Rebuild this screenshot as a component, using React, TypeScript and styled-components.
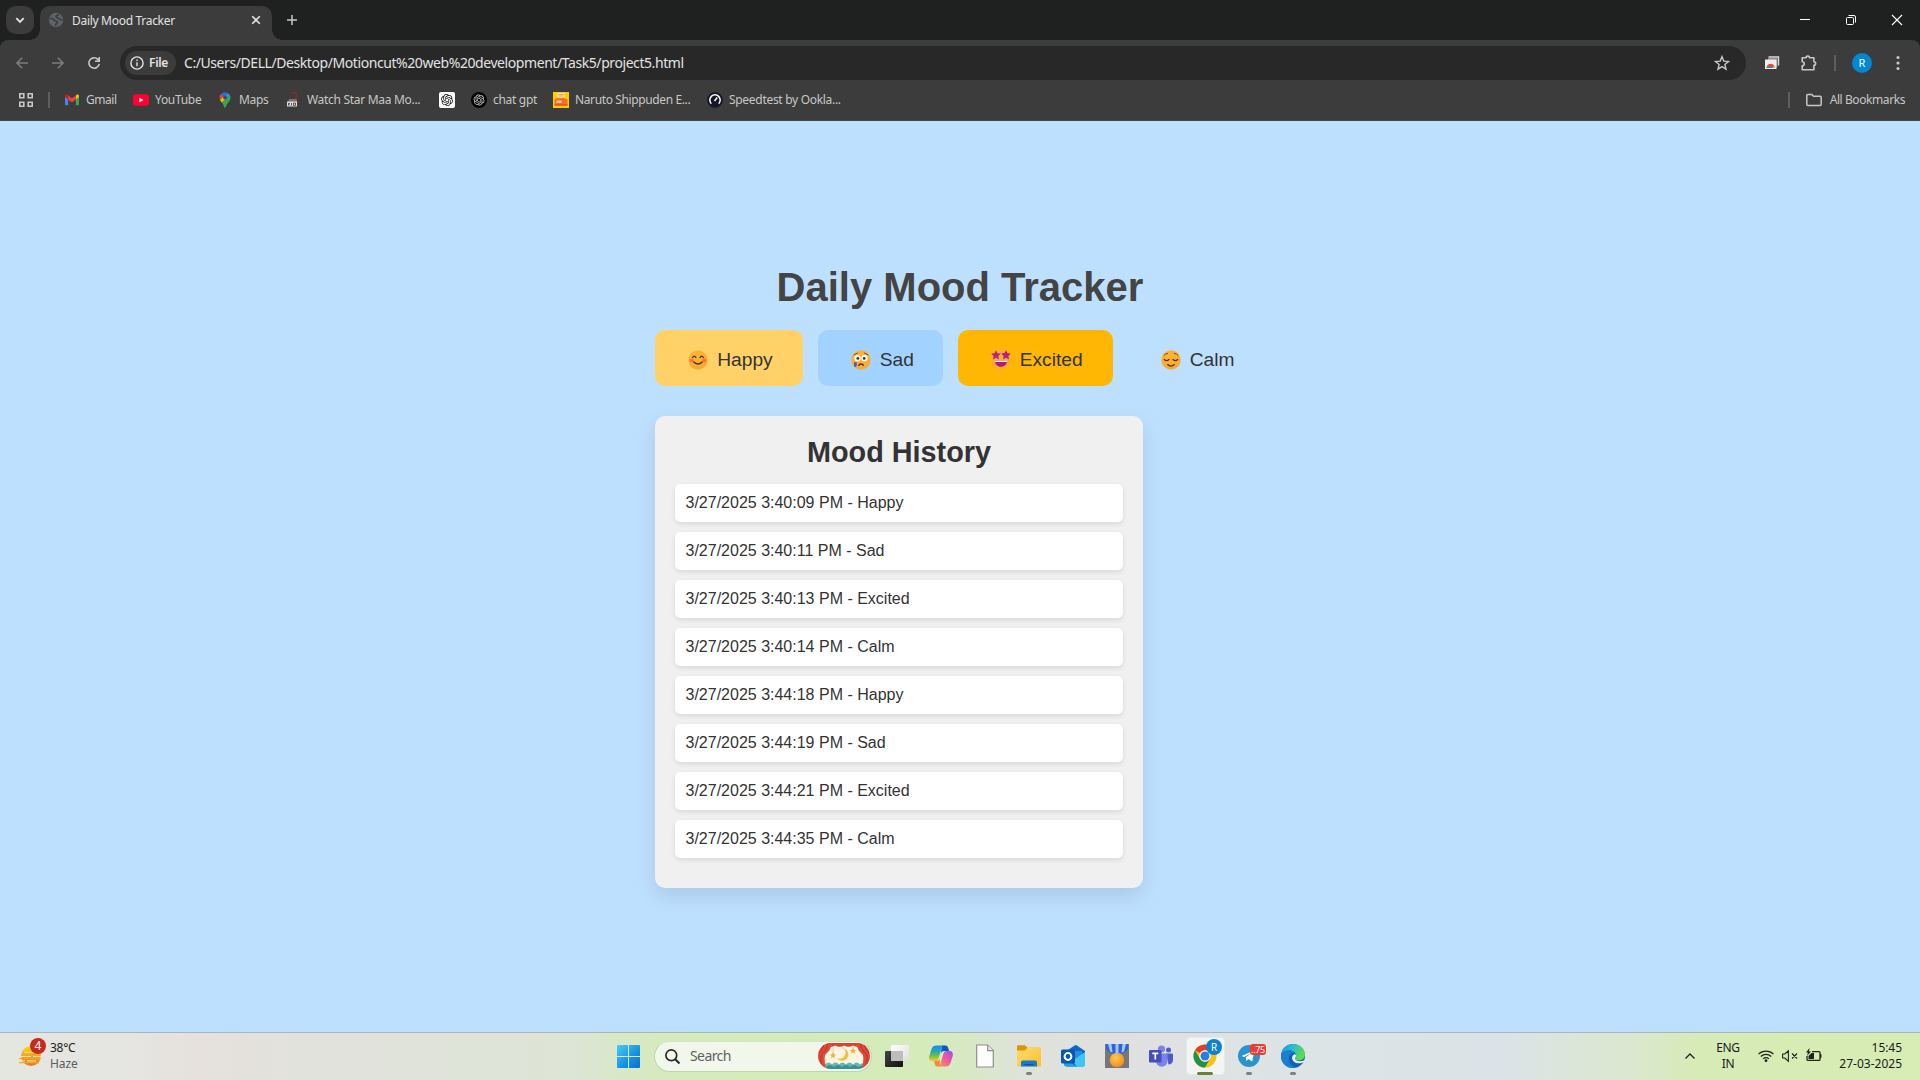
import React from "react";
import styled, { createGlobalStyle } from "styled-components";

const uiFont = `"Segoe UI", "Noto Sans", "Open Sans", sans-serif`;

const GlobalStyle = createGlobalStyle`
  * { box-sizing: border-box; }
  body { margin: 0; overflow: hidden; background: #bde0fe; font-family: Arial, "Liberation Sans", sans-serif; }
  svg { display: block; flex: none; overflow: visible; }
`;

const Screen = styled.div`
  width: 1920px;
  height: 1080px;
  display: flex;
  flex-direction: column;
`;

/* ---------- browser chrome ---------- */

const TabStrip = styled.div`
  height: 40px;
  flex: none;
  display: flex;
  align-items: flex-end;
  padding-left: 6px;
  background: #1f2020;
`;

const TabSearch = styled.div`
  width: 28px;
  height: 28px;
  margin: 0 6px 6px 0;
  border-radius: 10px;
  background: #3c3c3c;
  display: flex;
  align-items: center;
  justify-content: center;
`;

const Tab = styled.div`
  position: relative;
  width: 232px;
  height: 34px;
  padding: 0 9px 6px 8px;
  display: flex;
  align-items: center;
  border-radius: 10px 10px 0 0;
  background: #3c3c3c;
  &::before,
  &::after {
    content: "";
    position: absolute;
    bottom: 0;
    width: 10px;
    height: 10px;
  }
  &::before {
    left: -10px;
    background: radial-gradient(circle at 0 0, transparent 9.5px, #3c3c3c 10px);
  }
  &::after {
    right: -10px;
    background: radial-gradient(circle at 100% 0, transparent 9.5px, #3c3c3c 10px);
  }
`;

const Label = styled.span<{ $size?: number; $color?: string; $spacing?: number; $weight?: number }>`
  font-family: ${uiFont};
  font-size: ${(p) => p.$size ?? 12}px;
  font-weight: ${(p) => p.$weight ?? 400};
  color: ${(p) => p.$color ?? "#c7c7c7"};
  letter-spacing: ${(p) => p.$spacing ?? 0}px;
  line-height: 16px;
  white-space: nowrap;
`;

const TabTitle = styled(Label)`
  flex: 1;
  margin-left: 8px;
  padding-top: 1px;
`;

const NewTab = styled.div`
  width: 28px;
  height: 28px;
  margin: 0 0 6px 6px;
  display: flex;
  align-items: center;
  justify-content: center;
`;

const WindowButtons = styled.div`
  height: 40px;
  margin-left: auto;
  display: flex;
`;

const WindowButton = styled.div`
  width: 46px;
  display: flex;
  align-items: center;
  justify-content: center;
`;

const ToolbarBackdrop = styled.div`
  flex: none;
  height: 81px;
  background: #1f2020;
`;

const ToolbarPanel = styled.div`
  height: 81px;
  border-radius: 8px 8px 0 0;
  border-bottom: 1px solid #474747;
  background: #3c3c3c;
`;

const Toolbar = styled.div`
  height: 46px;
  display: flex;
  align-items: center;
`;

const NavButton = styled.div<{ $w?: number }>`
  width: ${(p) => p.$w ?? 36}px;
  flex: none;
  display: flex;
  justify-content: center;
`;

const MenuButton = styled.div`
  width: 46px;
  flex: none;
  padding-left: 22px;
`;

const NavGroup = styled.div`
  width: 120px;
  flex: none;
  padding-left: 4px;
  display: flex;
`;

const AddressBar = styled.div`
  width: 1626px;
  height: 34px;
  flex: none;
  padding: 0 16px 0 5px;
  display: flex;
  align-items: center;
  border-radius: 17px;
  background: #282828;
`;

const FileChip = styled.div`
  width: 51px;
  height: 24px;
  margin-right: 8px;
  padding-left: 5px;
  display: flex;
  align-items: center;
  gap: 5px;
  border-radius: 12px;
  background: #3c3c3c;
`;

const Grow = styled.div`
  flex: 1;
`;

const Separator = styled.div`
  width: 2px;
  height: 16px;
  background: #5e5e5e;
`;

const Avatar = styled.div<{ $size: number }>`
  width: ${(p) => p.$size}px;
  height: ${(p) => p.$size}px;
  border-radius: 50%;
  background: #0288d1;
  display: flex;
  align-items: center;
  justify-content: center;
`;

const BookmarksBar = styled.div`
  height: 34px;
  padding: 0 15px 6px 18px;
  display: flex;
  align-items: center;
`;

const AppsButton = styled.div`
  width: 30px;
`;

const BookmarkList = styled.div`
  margin-left: 14px;
  display: flex;
`;

const Bookmark = styled.div<{ $w: number }>`
  width: ${(p) => p.$w}px;
  display: flex;
  align-items: center;
  gap: 6px;
`;

const AllBookmarks = styled.div`
  margin-left: 16px;
  display: flex;
  align-items: center;
  gap: 8px;
`;

/* ---------- mood tracker page ---------- */

const Page = styled.main`
  height: 911px;
  flex: none;
  padding-top: 143px;
  display: flex;
  flex-direction: column;
  align-items: center;
  background: #bde0fe;
  color: #333;
`;

const Title = styled.h1`
  margin: 0 0 20px;
  font-size: 40px;
  line-height: 46px;
  color: #444;
`;

const Tracker = styled.div`
  width: 610px;
`;

const MoodButtons = styled.div`
  display: flex;
  gap: 15px;
  margin-bottom: 30px;
`;

const MoodButton = styled.button<{ $bg: string; $w: number }>`
  width: ${(p) => p.$w}px;
  height: 56px;
  flex: none;
  padding: 3px 0 0 33px;
  display: flex;
  align-items: center;
  gap: 9.2px;
  border: 0;
  border-radius: 10px;
  background: ${(p) => p.$bg};
  color: #333;
  font: 19.2px Arial, "Liberation Sans", sans-serif;
`;

const History = styled.section`
  width: 488px;
  padding: 20px;
  border-radius: 10px;
  background: #f0f0f0;
  box-shadow: 0 8px 20px rgba(0, 0, 0, 0.1);
`;

const HistoryTitle = styled.h2`
  margin: 0 0 15px;
  font-size: 28.8px;
  line-height: 33px;
  text-align: center;
`;

const HistoryList = styled.ul`
  margin: 0;
  padding: 0;
  list-style: none;
`;

const HistoryItem = styled.li`
  margin-bottom: 10px;
  padding: 10px 10px 10px 10.5px;
  border-radius: 5px;
  background: #fff;
  box-shadow: 0 2px 5px rgba(0, 0, 0, 0.1);
  font-size: 16px;
  line-height: 18px;
`;

/* ---------- taskbar ---------- */

const Taskbar = styled.footer`
  height: 48px;
  flex: none;
  padding-bottom: 1px;
  display: flex;
  border-top: 1px solid #a7b5bd;
  background: linear-gradient(
    90deg,
    #e4e6e0 0,
    #e5e5e1 130px,
    #e6e1dc 190px,
    #e1e2dc 330px,
    #dde5d6 570px,
    #d6eabe 660px,
    #d3ecb7 800px,
    #d5ebbb 940px,
    #dfe3da 1020px,
    #e0e0e0 1120px,
    #dde4e6 1300px,
    #dce3e8 1500px,
    #dbe8cd 1640px,
    #d7ebb6 1700px,
    #d8ecb5 1920px
  );
`;

const Weather = styled.div`
  width: 610px;
  padding-left: 19px;
  display: flex;
  align-items: center;
`;

const WeatherText = styled.div`
  margin-left: 7px;
  display: flex;
  flex-direction: column;
`;

const StartButton = styled.div`
  width: 44px;
  padding-left: 7px;
  display: flex;
  align-items: center;
`;

const SearchBox = styled.div`
  width: 218px;
  height: 31px;
  margin: 8px 3px 0 0;
  padding: 0 1px 1px 10px;
  display: flex;
  align-items: center;
  border-radius: 16px;
  border: 1px solid #c3d3ae;
  border-top-color: #d5e4c4;
  background: #f2f7ec;
`;

const SearchText = styled(Label)`
  flex: 1;
  margin-left: 10px;
`;

const AppSlot = styled.div<{ $state?: "running" | "active" }>`
  position: relative;
  width: 44px;
  display: flex;
  align-items: center;
  justify-content: center;
  &::after {
    content: "";
    display: ${(p) => (p.$state ? "block" : "none")};
    position: absolute;
    bottom: 4px;
    width: ${(p) => (p.$state === "active" ? 16 : 6)}px;
    height: 3px;
    border-radius: 2px;
    background: ${(p) => (p.$state === "active" ? "#6b8039" : "#7d7f80")};
  }
`;

const ActiveTile = styled.div`
  width: 39px;
  height: 38px;
  display: flex;
  align-items: center;
  justify-content: center;
  border-radius: 4px;
  border: 1px solid #e6e9e8;
  background: #f3f4f4;
`;

const Badge = styled.div<{ $top: number; $left: number; $w: number; $h: number; $bg: string; $r: number }>`
  position: absolute;
  top: ${(p) => p.$top}px;
  left: ${(p) => p.$left}px;
  width: ${(p) => p.$w}px;
  height: ${(p) => p.$h}px;
  border-radius: ${(p) => p.$r}px;
  background: ${(p) => p.$bg};
  display: flex;
  align-items: center;
  justify-content: center;
`;

const WeatherIcon = styled.div`
  position: relative;
`;

const Tray = styled.div`
  margin-left: auto;
  padding-right: 18px;
  display: flex;
  align-items: center;
`;

const TrayLines = styled.div<{ $w: number; $align: string }>`
  width: ${(p) => p.$w}px;
  display: flex;
  flex-direction: column;
  align-items: ${(p) => p.$align};
`;

const TrayChevron = styled.div`
  width: 32px;
`;

const TrayIcons = styled.div`
  margin: 0 0 0 19px;
  display: flex;
  align-items: center;
  gap: 8px;
`;

/* ---------- drawings ---------- */

const stroke = (color: string, width = 1.5) => ({ fill: "none", stroke: color, strokeWidth: width });

const OpenAiKnot = ({ color, size }: { color: string; size: number }) => (
  <svg width={size} height={size} viewBox="0 0 24 24" fill={color}>
    <path d="M22.28 9.82a5.98 5.98 0 0 0-.52-4.91 6.05 6.05 0 0 0-6.51-2.9A6.07 6.07 0 0 0 4.98 4.18a5.98 5.98 0 0 0-4 2.9 6.05 6.05 0 0 0 .74 7.1 5.98 5.98 0 0 0 .51 4.91 6.05 6.05 0 0 0 6.52 2.9A5.98 5.98 0 0 0 13.26 24a6.06 6.06 0 0 0 5.77-4.21 5.99 5.99 0 0 0 4-2.9 6.06 6.06 0 0 0-.75-7.07zm-9.02 12.61a4.48 4.48 0 0 1-2.88-1.04l.14-.08 4.78-2.76a.8.8 0 0 0 .39-.68v-6.74l2.02 1.17.04.05v5.58a4.5 4.5 0 0 1-4.49 4.5zM3.6 18.3a4.47 4.47 0 0 1-.53-3.01l.14.09 4.78 2.76a.77.77 0 0 0 .78 0l5.84-3.37v2.33l-.03.06L9.74 19.95A4.5 4.5 0 0 1 3.6 18.3zM2.34 7.9a4.49 4.49 0 0 1 2.37-1.98V11.6a.77.77 0 0 0 .39.68l5.81 3.35-2.02 1.17h-.07l-4.83-2.79A4.5 4.5 0 0 1 2.34 7.9zm16.6 3.86-5.84-3.39 2.02-1.16h.07l4.83 2.79a4.49 4.49 0 0 1-.68 8.1v-5.68a.79.79 0 0 0-.4-.66zm2.01-3.03-.14-.08-4.77-2.78a.78.78 0 0 0-.79 0L9.41 9.23V6.9l.03-.06 4.83-2.79a4.5 4.5 0 0 1 6.68 4.66zM8.31 12.86l-2.02-1.16-.04-.06V6.07a4.5 4.5 0 0 1 7.38-3.45l-.14.08-4.78 2.76a.8.8 0 0 0-.39.68zm1.1-2.36L12 9l2.61 1.5v3L12 15l-2.6-1.5z" />
  </svg>
);

const GlobeIcon = () => (
  <svg width="16" height="16" viewBox="0 0 16 16">
    <circle cx="8" cy="8" r="7.2" fill="#5f6368" />
    <path d="M1.500 6.500h2.300c2.200 0 1.700 2.500 3.700 2.500 2.500 0 2 1.500 1 2.300-.8.600-.8 1.500-.8 2.700M11 1.800C10.500 3.500 8 3 8 4.500c0 1.700 2.500.8 3 2.300.4 1.200 2 1 3.500.8" {...stroke("#3a3c40", 1.600)} />
  </svg>
);

const GmailIcon = () => (
  <svg width="16" height="16" viewBox="0 0 16 16">
    <path d="M1 4.2v8.3c0 .5.4.8.9.8h2.3V7z" fill="#4285f4" />
    <path d="M15 4.2v8.3c0 .5-.4.8-.9.8h-2.3V7z" fill="#34a853" />
    <path d="M11.8 3.4V7.5L15 5V4c0-1.3-1.5-2-2.5-1.2z" fill="#fbbc04" />
    <path d="M4.2 3.4V7.5L1 5V4c0-1.3 1.5-2 2.5-1.2z" fill="#c5221f" />
    <path d="M4.2 3.4 8 6.3l3.8-2.9v4.1L8 10.4 4.2 7.5z" fill="#ea4335" />
  </svg>
);

const YouTubeIcon = () => (
  <svg width="16" height="16" viewBox="0 0 16 16">
    <rect y="2.2" width="16" height="11.6" rx="3" fill="#ff0033" />
    <path d="M6.4 5.7v4.6L10.4 8z" fill="#fff" />
  </svg>
);

const MapsIcon = () => (
  <svg width="16" height="16" viewBox="0 0 16 16">
    <path d="M8 .3a5.4 5.4 0 0 0-4.2 2l3 2.5L11 1.2A5.4 5.4 0 0 0 8 .3z" fill="#1a73e8" />
    <path d="M3.8 2.3a5.4 5.4 0 0 0-.7 5.8l3.7-3.6z" fill="#ea4335" />
    <path d="M11 1.2 6.8 5 9.2 7 13 3.3a5 5 0 0 0-2-2.1z" fill="#4285f4" />
    <path d="M3.1 8.1c.4.9 1 1.7 1.7 2.5L9.6 6.6 6.5 4.5z" fill="#fbbc04" />
    <path d="M13 3.3c1 2.1.6 4.2-.7 6-1.3 1.7-2.7 2.6-3.3 5.3-.2.9-.5 1.2-1 1.2s-.8-.3-1-1.2c-.4-1.600-1-2.700-2.200-4z" fill="#34a853" />
    <circle cx="8" cy="5.7" r="1.9" fill="#3c4a73" />
  </svg>
);

const StarMaaIcon = () => (
  <svg width="16" height="16" viewBox="0 0 16 16">
    <path d="M6 1.500c2-1.500 5-1 5.500 1S10 5 11 7s1.500 4.500 1 7" {...stroke("#8a2b2b", 1.300)} />
    <path d="M6.500 3.500 8.500 6" {...stroke("#7a2b2b", 1)} />
    <path d="M4 7h7.500l.8 3H3z" fill="#77716f" />
    <rect x="2" y="9.500" width="10" height="5" fill="#dcdcdc" />
    <path d="M3.500 11v2.500m0-1.300 1.500-1.200m-1.500 1 1.500 1.500M6.500 11v2.500M8.500 11h2v2.500h-2z" {...stroke("#4b4b4b", 0.900)} />
  </svg>
);

const ChatWhiteIcon = () => (
  <svg width="16" height="16" viewBox="0 0 16 16">
    <rect width="16" height="16" rx="2" fill="#fff" />
    <g transform="translate(2 2)">
      <OpenAiKnot color="#111" size={12} />
    </g>
  </svg>
);

const ChatDarkIcon = () => (
  <svg width="16" height="16" viewBox="0 0 16 16">
    <circle cx="8" cy="8" r="8" fill="#000" />
    <g transform="translate(2.500 2.500)">
      <OpenAiKnot color="#ddd" size={11} />
    </g>
  </svg>
);

const NarutoIcon = () => (
  <svg width="16" height="16" viewBox="0 0 16 16">
    <rect width="16" height="16" fill="#ffcc00" />
    <path d="M4.500 1h7v4.500h-7z" fill="#ffe9c4" />
    <path d="M5.500 2.500h5M5.500 4h5" {...stroke("#e8905a", 0.900)} />
    <path d="M1.500 7.500 4 6h7l3.500 1.500V13h-13z" fill="#f0702a" />
    <path d="M3.500 8.500h5v2.500h-5z" fill="#ffc79a" />
    <path d="M1.500 13h13" {...stroke("#d9541a", 1.500)} />
  </svg>
);

const SpeedtestIcon = () => (
  <svg width="16" height="16" viewBox="0 0 16 16">
    <circle cx="8" cy="8" r="7.800" fill="#141526" />
    <path d="M4.300 11.700A5.200 5.200 0 1 1 11.700 11.700" {...stroke("#fff", 1.500)} />
    <path d="m7.500 9 2.700-3.500" {...stroke("#fff", 1.500)} />
  </svg>
);

type MoodName = "Happy" | "Sad" | "Excited" | "Calm";

const MoodFace = ({ mood }: { mood: MoodName }) => (
  <svg width="20" height="20" viewBox="0 0 20 20">
    <defs>
      <radialGradient id={`face-${mood}`} cx="40%" cy="30%" r="80%">
        <stop offset="0" stopColor="#ffb636" />
        <stop offset="1" stopColor="#fba62c" />
      </radialGradient>
    </defs>
    <circle cx="10" cy="10" r="9.700" fill={`url(#face-${mood})`} />
    {mood === "Happy" && (
      <>
        <circle cx="3.700" cy="10.500" r="2" fill="#ff7043" />
        <circle cx="16.300" cy="10.500" r="2" fill="#ff7043" />
        <path d="M4.600 7.600q1.700-3 3.400 0M12 7.600q1.700-3 3.400 0" {...stroke("#4a3222", 1.200)} strokeLinecap="round" />
        <path d="M5.800 12q4.200 4 8.400 0" {...stroke("#4a3222", 1.300)} strokeLinecap="round" />
      </>
    )}
    {mood === "Sad" && (
      <>
        <path d="M3 4.800 6.500 3M17 4.800 13.500 3" {...stroke("#6b4420", 0.900)} strokeLinecap="round" />
        <circle cx="6.500" cy="8.200" r="3.100" fill="#fff" />
        <circle cx="13.500" cy="8.200" r="3.100" fill="#fff" />
        <circle cx="6.800" cy="8.400" r="1.400" fill="#35343f" />
        <circle cx="13.200" cy="8.400" r="1.400" fill="#35343f" />
        <path d="M7.700 15.200q2.300-2.400 4.600 0" {...stroke("#4a3222", 1.300)} strokeLinecap="round" />
        <path d="M3 12.300h2.800v2.800a1.600 1.600 0 0 1-2.800 1.200z" fill="#4759e0" />
      </>
    )}
    {mood === "Excited" && (
      <>
        <path d="m5 .2 1.500 3 3.300.4-2.400 2.400.6 3.400-3-1.600-3 1.600.6-3.400L.2 3.700l3.300-.5zM15 .2l1.500 3 3.300.4-2.400 2.400.6 3.400-3-1.600-3 1.600.6-3.400-2.400-2.400 3.300-.5z" fill="#be1e87" />
        <path d="M4 10.800h12c0 3.600-2.300 6-6 6s-6-2.400-6-6z" fill="#b5177e" />
        <path d="M4 10.800h12v1.200H4.200z" fill="#fff" />
      </>
    )}
    {mood === "Calm" && (
      <>
        <path d="M3 5.300q1.500-2 3.600-1.900M17 5.300q-1.500-2-3.600-1.900" {...stroke("#6b4420", 0.900)} strokeLinecap="round" />
        <path d="M3.300 9.500q2.200 2.400 4.600 0M12.100 9.500q2.200 2.400 4.600 0" {...stroke("#4a3222", 1.200)} strokeLinecap="round" />
        <path d="M6.600 14.600q3.400 3 6.800 0" {...stroke("#4a3222", 1.300)} strokeLinecap="round" />
      </>
    )}
  </svg>
);

const HazeIcon = () => (
  <svg width="24" height="24" viewBox="0 0 24 24">
    <defs>
      <linearGradient id="haze" x1="0" y1="0" x2="0" y2="1">
        <stop offset="0" stopColor="#ffd21f" />
        <stop offset="1" stopColor="#ef7412" />
      </linearGradient>
    </defs>
    <circle cx="12" cy="12" r="10" fill="url(#haze)" />
    <path d="M5 8.300h10M1 12.500h11M14 12.500h8M0 17h6M8 16.800h9" {...stroke("#ffe0a0", 1.200)} />
    <path d="M0 14.500h11M12 14.500h9M0 18.700h20" {...stroke("#e9a445", 1.200)} />
  </svg>
);

const WindowsIcon = () => (
  <svg width="23" height="23" viewBox="0 0 23 23">
    <defs>
      <linearGradient id="win" x1="0" y1="0" x2="1" y2="1">
        <stop offset="0" stopColor="#4ccbf9" />
        <stop offset="0.550" stopColor="#1795e2" />
        <stop offset="1" stopColor="#0470cf" />
      </linearGradient>
    </defs>
    <path d="M1 0h10v11H0V1a1 1 0 0 1 1-1zM12 0h10a1 1 0 0 1 1 1v10H12zM0 12h11v11H1a1 1 0 0 1-1-1zM12 12h11v10a1 1 0 0 1-1 1H12z" fill="url(#win)" />
  </svg>
);

const TheatreIcon = () => (
  <svg width="52" height="26" viewBox="0 0 52 26">
    <clipPath id="stage">
      <rect width="52" height="26" rx="13" />
    </clipPath>
    <g clipPath="url(#stage)">
      <rect width="52" height="26" fill="#fbf5e2" />
      <path d="M15 0v11M25 0v6M35 0v6" {...stroke("#e2c889", 0.800)} />
      <path d="M25.500 5.500a6.200 6.200 0 1 1-6.500 9.500 5.800 5.800 0 0 0 6.500-9.500z" fill="#f0bd49" />
      <path d="m15 9 .9 2.200 2.300.2-1.800 1.500.6 2.300-2-1.300-2 1.300.6-2.300-1.800-1.500 2.300-.2zM35 4.500l.9 2.200 2.300.2-1.800 1.500.6 2.300-2-1.300-2 1.300.6-2.300-1.800-1.500 2.300-.2z" fill="#eeb23d" />
      <path d="M7 21.500q3.500-4 7 0 3.500-4 7 0 3.500-4 7 0 3.500-4 7 0 3.500-4 7 0 2-2 4-1V26H7z" fill="#65b9b0" />
      <path d="M8 24q4-4 8 0 4-4 8 0 4-4 8 0 4-4 8 0l5-2v5H8z" fill="#3b8f93" />
      <path d="M0 0h52v2.500q-4 2.500-8 0-4 2.500-9 0-4 2.500-9 0-4 2.500-9 0-4 2.500-9 0-4 2.500-8 0z" fill="#d8432f" />
      <path d="M0 0h14q-1 7-7 12-1 5 1 14H0zM52 0H38q1 7 7 12 1 5-1 14h8z" fill="#dd4a36" />
      <path d="M10 1Q8 8 3 12v12M6 1Q5 6 1 10M42 1q2 7 7 11v12M46 1q1 5 5 9" {...stroke("#b5332a", 1)} />
    </g>
  </svg>
);

const TaskViewIcon = () => (
  <svg width="24" height="24" viewBox="0 0 24 24">
    <defs>
      <linearGradient id="tv" x1="0" y1="0" x2="1" y2="1">
        <stop offset="0" stopColor="#444" />
        <stop offset="1" stopColor="#111" />
      </linearGradient>
      <linearGradient id="tvl" x1="0" y1="0" x2="1" y2="1">
        <stop offset="0" stopColor="#fff" />
        <stop offset="1" stopColor="#dedede" />
      </linearGradient>
    </defs>
    <rect x="0" y="7" width="18" height="16" rx="1" fill="url(#tv)" />
    <rect x="6" y="1" width="18" height="16" rx="1" fill="url(#tvl)" />
    <path d="M6 7h12v10H6z" fill="#bdbdbd" />
  </svg>
);

const CopilotIcon = () => (
  <svg width="24" height="24" viewBox="0 0 24 24">
    <defs>
      <linearGradient id="cpa" x1="0" y1="0" x2="0" y2="1">
        <stop offset="0" stopColor="#1b8fe8" />
        <stop offset="0.400" stopColor="#2aa5b8" />
        <stop offset="0.700" stopColor="#7fc143" />
        <stop offset="1" stopColor="#f8cb1c" />
      </linearGradient>
      <linearGradient id="cpb" x1="1" y1="0" x2="0" y2="1">
        <stop offset="0" stopColor="#a24de8" />
        <stop offset="0.500" stopColor="#ef5a9d" />
        <stop offset="1" stopColor="#ff9a4b" />
      </linearGradient>
    </defs>
    <path d="M13 1.500h3.500c1.600 0 2.200 1 2.600 2.300L20.200 7H15c-2 0-2.600.9-3.200 2.500z" fill="#0f54c8" />
    <path d="M7.500 1.500H15c-1.200 0-1.900.8-2.300 2.200l-3 10.300c-.6 2.100-1.500 3-3.500 3H3.500C.8 17-.4 15 .3 12L2.500 5c.9-2.500 2.500-3.500 5-3.500z" fill="url(#cpa)" />
    <path d="M16.500 22.500H9c1.200 0 1.900-.8 2.300-2.200L14.300 10c.6-2.100 1.500-3 3.500-3h2.700c2.700 0 3.900 2 3.200 5l-2.200 7c-.9 2.500-2.500 3.500-5 3.500z" fill="url(#cpb)" />
    <path d="M11 22.500H8.500c-1.600 0-2.200-1-2.600-2.300L5 17h2c2 0 3-.7 3.600-2.500z" fill="#f68a3c" />
  </svg>
);

const DocumentIcon = () => (
  <svg width="18" height="24" viewBox="0 0 18 24">
    <path d="M.7 1h11l5.600 5.600V23H.7z" fill="#fdfdfd" stroke="#8c8f8c" strokeWidth="1.200" />
    <path d="M11.700 1v5.600h5.600" fill="#e8e8e8" stroke="#8c8f8c" strokeWidth="1.200" />
  </svg>
);

const ExplorerIcon = () => (
  <svg width="24" height="24" viewBox="0 0 24 24">
    <defs>
      <linearGradient id="fold" x1="0" y1="0" x2="1" y2="1">
        <stop offset="0" stopColor="#ffdc6b" />
        <stop offset="1" stopColor="#f9be2c" />
      </linearGradient>
    </defs>
    <path d="M0 2.500A1.200 1.200 0 0 1 1.200 1.300H8l2.500 2.500H23v6H0z" fill="#d9950e" />
    <path d="M0 6.500h8l2.500-2.700h12.300A1.200 1.200 0 0 1 24 5v16.500a1 1 0 0 1-1 1H1a1 1 0 0 1-1-1z" fill="url(#fold)" />
    <path d="M4 22.500v-4.300a1.700 1.700 0 0 1 1.700-1.700h12.600a1.700 1.700 0 0 1 1.700 1.700v4.300z" fill="#1c79ca" />
    <path d="M7.500 20h9v1.200h-9z" fill="#0b559c" />
  </svg>
);

const OutlookIcon = () => (
  <svg width="24" height="24" viewBox="0 0 24 24">
    <path d="M3 8.500 14 1.300a1.500 1.500 0 0 1 1.600 0L24 7v13a2.500 2.500 0 0 1-2.500 2.500H6A3 3 0 0 1 3 19.500z" fill="#1467c4" />
    <path d="M6 7h15v9H6z" fill="#1f8ee4" />
    <path d="M24 8 11 17l5 5.500h5.500A2.500 2.500 0 0 0 24 20z" fill="#41c5f5" />
    <path d="M3 15 16 22.500H6a3 3 0 0 1-3-3z" fill="#1ba4e8" />
    <rect y="5.500" width="14" height="14" rx="1.500" fill="#0a57b0" />
    <circle cx="7" cy="12.500" r="3.400" {...stroke("#fff", 2)} />
  </svg>
);

const MedalIcon = () => (
  <svg width="24" height="24" viewBox="0 0 24 24">
    <defs>
      <radialGradient id="medal" cx="40%" cy="35%" r="70%">
        <stop offset="0" stopColor="#ffc94d" />
        <stop offset="1" stopColor="#f08a1d" />
      </radialGradient>
    </defs>
    <path d="M0 0h24v24H0z" fill="#777777" />
    <path d="M1 0h22v5l-3 3-5 2.500H9L4 8 1 5z" fill="#2d62df" />
    <path d="M3 0h3.500l1 8.500-2.500-1zM21 0h-3.500l-1 8.500 2.500-1zM10.500 0h3v10h-3z" fill="#9ccaff" />
    <circle cx="12" cy="16" r="7.300" fill="url(#medal)" />
  </svg>
);

const TeamsIcon = () => (
  <svg width="24" height="24" viewBox="0 0 24 24">
    <circle cx="19.500" cy="6" r="2.500" fill="#5059c9" />
    <circle cx="12.500" cy="5" r="3.600" fill="#7b83eb" />
    <path d="M17 9.500h6a1 1 0 0 1 1 1V16c0 2.700-2 4.500-4.500 4.500z" fill="#5059c9" />
    <path d="M7 9.500h11.500v7.500c0 3.300-2.500 5.700-5.700 5.700S7 20.300 7 17z" fill="#7b83eb" />
    <rect y="6" width="12.500" height="12.500" rx="1.200" fill="#464eb8" />
    <path d="M3.300 9.300h6M6.300 9.300v6.300" {...stroke("#fff", 1.700)} />
  </svg>
);

const ChromeIcon = ({ size }: { size: number }) => (
  <svg width={size} height={size} viewBox="0 0 48 48">
    <circle cx="24" cy="24" r="23" fill="#fbc116" />
    <path d="M4.080 12.500A23 23 0 0 1 43.900 12.500H24A11.500 11.500 0 0 0 14 18.200z" fill="#e33b2e" />
    <path d="M4.080 12.500A23 23 0 0 0 24 47l10-17.300a11.500 11.500 0 0 1-19.960 0z" fill="#229342" />
    <circle cx="24" cy="24" r="11.500" fill="#fff" />
    <circle cx="24" cy="24" r="9" fill="#2c7be8" />
  </svg>
);

const TelegramIcon = () => (
  <svg width="24" height="24" viewBox="0 0 24 24">
    <circle cx="12" cy="12" r="11" fill="#2b93cc" />
    <path d="m4.500 12 13-5.500-2.300 11-4-2.500-1.900 2-.5-3.500 6-5-7.500 4.500z" fill="#fff" />
  </svg>
);

const EdgeIcon = () => (
  <svg width="24" height="24" viewBox="0 0 24 24">
    <defs>
      <linearGradient id="edge" x1="0" y1="0" x2="1" y2="0.300">
        <stop offset="0" stopColor="#1795d9" />
        <stop offset="0.500" stopColor="#27bfd4" />
        <stop offset="1" stopColor="#63d94b" />
      </linearGradient>
    </defs>
    <circle cx="12" cy="12" r="12" fill="#0f60b6" />
    <path d="M.1 11C.8 4.500 6 0 12 0c7 0 12 5 12 10.500 0 3.700-2.800 6-6 6-2.600 0-4-1-4-2 0-.7 1-1 1-3 0-2.500-2.500-5-6.500-5C4 6.500 1 8.500.1 11z" fill="url(#edge)" />
    <path d="M0 12c0-3 3-5.500 8-5.500 3 0 5 1 6 2.500-4-.5-7 3-6 7.500.8 3.700 4 6.500 7 7-8 2-15-3.500-15-11.500z" fill="#1a7fd0" />
    <path d="M14 10c-2 .5-3.300 2.500-2.800 5 .7 3 4.300 4.700 8 4.300 1.800-.2 3.200-.9 4.300-2 .6-.9-.5-1-1.300-.5-4 1-8.200-.2-8.200-2.300 0-1 1.200-1.600 1-3z" fill="#e9f4fa" />
  </svg>
);

/* ---------- content ---------- */

const bookmarks = [
  { icon: <GmailIcon />, name: "Gmail", width: 69, spacing: -0.45 },
  { icon: <YouTubeIcon />, name: "YouTube", width: 84, spacing: -0.3 },
  { icon: <MapsIcon />, name: "Maps", width: 68, spacing: -0.3 },
  { icon: <StarMaaIcon />, name: "Watch Star Maa Mo...", width: 154, spacing: -0.3 },
  { icon: <ChatWhiteIcon />, name: "", width: 32, spacing: 0 },
  { icon: <ChatDarkIcon />, name: "chat gpt", width: 82, spacing: -0.3 },
  { icon: <NarutoIcon />, name: "Naruto Shippuden E...", width: 154, spacing: -0.38 },
  { icon: <SpeedtestIcon />, name: "Speedtest by Ookla...", width: 140, spacing: -0.3 },
];

const moods: { name: MoodName; bg: string; width: number }[] = [
  { name: "Happy", bg: "#ffd166", width: 147.5 },
  { name: "Sad", bg: "#a2d2ff", width: 125 },
  { name: "Excited", bg: "#ffb703", width: 155 },
  { name: "Calm", bg: "transparent", width: 137 },
];

const history = [
  "3/27/2025 3:40:09 PM - Happy",
  "3/27/2025 3:40:11 PM - Sad",
  "3/27/2025 3:40:13 PM - Excited",
  "3/27/2025 3:40:14 PM - Calm",
  "3/27/2025 3:44:18 PM - Happy",
  "3/27/2025 3:44:19 PM - Sad",
  "3/27/2025 3:44:21 PM - Excited",
  "3/27/2025 3:44:35 PM - Calm",
];

const BrowserTabs = () => (
  <TabStrip>
    <TabSearch>
      <svg width="10" height="10" viewBox="0 0 10 10">
        <path d="m1.300 3.200 3.700 3.700 3.700-3.700" {...stroke("#e3e3e3", 1.800)} />
      </svg>
    </TabSearch>
    <Tab>
      <GlobeIcon />
      <TabTitle $color="#e3e3e3" $spacing={-0.3}>Daily Mood Tracker</TabTitle>
      <svg width="14" height="14" viewBox="0 0 14 14">
        <path d="m3.200 3.200 7.600 7.600M10.800 3.200l-7.600 7.600" {...stroke("#e3e3e3", 1.600)} />
      </svg>
    </Tab>
    <NewTab>
      <svg width="12" height="12" viewBox="0 0 12 12">
        <path d="M6 1v10M1 6h10" {...stroke("#c7c7c7", 1.500)} />
      </svg>
    </NewTab>
    <WindowButtons>
      <WindowButton>
        <svg width="10" height="10" viewBox="0 0 10 10">
          <path d="M0 4.500h10" {...stroke("#fff", 1)} />
        </svg>
      </WindowButton>
      <WindowButton>
        <svg width="10" height="10" viewBox="0 0 10 10">
          <rect x="0.500" y="2.500" width="7" height="7" rx="1" {...stroke("#fff", 1)} />
          <path d="M2.500.5H8A1.500 1.500 0 0 1 9.500 2v5.500" {...stroke("#fff", 1)} />
        </svg>
      </WindowButton>
      <WindowButton>
        <svg width="10" height="10" viewBox="0 0 10 10">
          <path d="m0 0 10 10M10 0 0 10" {...stroke("#fff", 1.100)} />
        </svg>
      </WindowButton>
    </WindowButtons>
  </TabStrip>
);

const BrowserToolbar = () => (
  <ToolbarBackdrop>
    <ToolbarPanel>
      <Toolbar>
        <NavGroup>
          <NavButton>
            <svg width="12" height="12" viewBox="0 0 12 12">
              <path d="M12 6H1.200M6.200.7.900 6l5.300 5.300" {...stroke("#7d7d7d", 1.500)} />
            </svg>
          </NavButton>
          <NavButton>
            <svg width="12" height="12" viewBox="0 0 12 12">
              <path d="M0 6h10.800M5.800.7 11.100 6l-5.300 5.300" {...stroke("#7d7d7d", 1.500)} />
            </svg>
          </NavButton>
          <NavButton>
            <svg width="12" height="12" viewBox="0 0 12 12">
              <path d="M11.200 6.800A5.200 5.200 0 1 1 9.800 2.400L11 3.700M11.200 0v4.200H7" {...stroke("#c7c7c7", 1.600)} />
            </svg>
          </NavButton>
        </NavGroup>
        <AddressBar>
          <FileChip>
            <svg width="14" height="14" viewBox="0 0 14 14">
              <circle cx="7" cy="7" r="6.100" {...stroke("#e3e3e3", 1.400)} />
              <path d="M7 6.300v4M7 3.500v1.400" {...stroke("#e3e3e3", 1.400)} />
            </svg>
            <Label $color="#e3e3e3" $weight={600} $spacing={-0.3}>File</Label>
          </FileChip>
          <Label $size={14} $color="#e3e3e3" $spacing={-0.425}>
            C:/Users/DELL/Desktop/Motioncut%20web%20development/Task5/project5.html
          </Label>
          <Grow />
          <svg width="16" height="16" viewBox="0 0 16 16">
            <path d="m8 1.700 1.800 4.400 4.700.4-3.600 3 1.100 4.700-4-2.500-4 2.500 1.100-4.700-3.600-3 4.700-.4z" {...stroke("#c7c7c7", 1.400)} />
          </svg>
        </AddressBar>
        <NavButton $w={52}>
          <svg width="16" height="16" viewBox="0 0 16 16">
            <path d="M4.500 2h10v8.500" {...stroke("#dcdcdc", 1.400)} />
            <path d="M4 3h9.500v9H4z" fill="#8c8c8c" />
            <path d="M1 4.500h11.500V14H1z" fill="#eee" />
            <path d="M2.500 13a4.200 4.200 0 0 1 8.400 0z" fill="#e54a3b" />
            <path d="m2.500 13 .8-2.300L6 13z" fill="#23a455" />
            <path d="m10.900 13-.8-2.300L8 13z" fill="#fbc116" />
            <path d="M4.900 13a1.900 1.900 0 0 1 3.800 0z" fill="#3a7be0" />
          </svg>
        </NavButton>
        <NavButton $w={22}>
          <svg width="16" height="16" viewBox="0 0 16 16">
            <path d="M1.200 2.800h3.900a1.700 1.700 0 0 1 3.400 0h4.400v4a1.700 1.700 0 0 1 0 3.500v4.500H1.200v-4a1.900 1.900 0 0 0 0-4z" {...stroke("#c7c7c7", 1.600)} strokeLinejoin="round" />
          </svg>
        </NavButton>
        <NavButton $w={30}>
          <Separator />
        </NavButton>
        <NavButton $w={24}>
          <Avatar $size={20}>
            <Label $size={11} $color="#fff">R</Label>
          </Avatar>
        </NavButton>
        <MenuButton>
          <svg width="4" height="16" viewBox="0 0 4 16" fill="#c7c7c7">
            <circle cx="2" cy="2.500" r="1.600" />
            <circle cx="2" cy="8" r="1.600" />
            <circle cx="2" cy="13.500" r="1.600" />
          </svg>
        </MenuButton>
      </Toolbar>
      <BookmarksBar>
        <AppsButton>
          <svg width="16" height="16" viewBox="0 0 16 16">
            <path d="M1.800 1.800h4v4h-4zM10.200 1.800h4v4h-4zM1.800 10.200h4v4h-4zM10.200 10.200h4v4h-4z" {...stroke("#c7c7c7", 1.600)} />
          </svg>
        </AppsButton>
        <Separator />
        <BookmarkList>
          {bookmarks.map((b, i) => (
            <Bookmark key={i} $w={b.width}>
              {b.icon}
              {b.name && <Label $spacing={b.spacing}>{b.name}</Label>}
            </Bookmark>
          ))}
        </BookmarkList>
        <Grow />
        <Separator />
        <AllBookmarks>
          <svg width="16" height="16" viewBox="0 0 16 16">
            <path d="M.8 3.500a1 1 0 0 1 1-1h4l1.700 1.800h6.700a1 1 0 0 1 1 1v7.200a1 1 0 0 1-1 1H1.800a1 1 0 0 1-1-1z" {...stroke("#c7c7c7", 1.500)} />
          </svg>
          <Label $spacing={-0.42}>All Bookmarks</Label>
        </AllBookmarks>
      </BookmarksBar>
    </ToolbarPanel>
  </ToolbarBackdrop>
);

const MoodPage = () => (
  <Page>
    <Title>Daily Mood Tracker</Title>
    <Tracker>
      <MoodButtons>
        {moods.map((m) => (
          <MoodButton key={m.name} $bg={m.bg} $w={m.width}>
            <MoodFace mood={m.name} />
            <span>{m.name}</span>
          </MoodButton>
        ))}
      </MoodButtons>
      <History>
        <HistoryTitle>Mood History</HistoryTitle>
        <HistoryList>
          {history.map((entry) => (
            <HistoryItem key={entry}>{entry}</HistoryItem>
          ))}
        </HistoryList>
      </History>
    </Tracker>
  </Page>
);

const DesktopTaskbar = () => (
  <Taskbar>
    <Weather>
      <WeatherIcon>
        <HazeIcon />
        <Badge $top={-6} $left={11} $w={16} $h={16} $r={8} $bg="#c42b1c">
          <Label $size={12} $color="#fff">4</Label>
        </Badge>
      </WeatherIcon>
      <WeatherText>
        <Label $color="#1b1b1b" $spacing={-0.3}>38°C</Label>
        <Label $color="#5c5c5c" $spacing={-0.1}>Haze</Label>
      </WeatherText>
    </Weather>
    <StartButton>
      <WindowsIcon />
    </StartButton>
    <SearchBox>
      <svg width="15" height="15" viewBox="0 0 15 15">
        <circle cx="6.300" cy="6.300" r="5.400" {...stroke("#2a2a2a", 1.700)} />
        <path d="m10.200 10.200 4.300 4.300" {...stroke("#2a2a2a", 2)} />
      </svg>
      <SearchText $size={14} $color="#5f625c" $spacing={-0.6}>Search</SearchText>
      <TheatreIcon />
    </SearchBox>
    <AppSlot><TaskViewIcon /></AppSlot>
    <AppSlot><CopilotIcon /></AppSlot>
    <AppSlot><DocumentIcon /></AppSlot>
    <AppSlot $state="running"><ExplorerIcon /></AppSlot>
    <AppSlot><OutlookIcon /></AppSlot>
    <AppSlot><MedalIcon /></AppSlot>
    <AppSlot><TeamsIcon /></AppSlot>
    <AppSlot $state="active">
      <ActiveTile>
        <ChromeIcon size={24} />
      </ActiveTile>
      <Badge $top={6} $left={23} $w={16} $h={16} $r={8} $bg="#0d82c9">
        <Label $size={10} $color="#fff">R</Label>
      </Badge>
    </AppSlot>
    <AppSlot $state="running">
      <TelegramIcon />
      <Badge $top={11} $left={23} $w={16} $h={11} $r={3} $bg="#ee3b36">
        <Label $size={9} $color="#fff" $spacing={-0.3}>..75</Label>
      </Badge>
    </AppSlot>
    <AppSlot $state="running"><EdgeIcon /></AppSlot>
    <Tray>
      <TrayChevron>
        <svg width="10" height="6" viewBox="0 0 10 6">
          <path d="m.5 5.500 4.500-4.500 4.500 4.500" {...stroke("#1f241a", 1.300)} />
        </svg>
      </TrayChevron>
      <TrayLines $w={22} $align="center">
        <Label $color="#1b1b1b" $spacing={-0.4}>ENG</Label>
        <Label $color="#1b1b1b" $spacing={-0.4}>IN</Label>
      </TrayLines>
      <TrayIcons>
        <svg width="16" height="12" viewBox="0 0 16 12">
          <path d="M.5 4.200a10.600 10.600 0 0 1 15 0M2.800 6.500a7.300 7.300 0 0 1 10.400 0M5.100 8.800a4.100 4.100 0 0 1 5.800 0" {...stroke("#1f241a", 1.200)} />
          <circle cx="8" cy="10.700" r="1.400" fill="#1f241a" />
        </svg>
        <svg width="16" height="12" viewBox="0 0 16 12">
          <path d="M.6 4h2.200L6.400.8v10.400L2.800 8H.6zM10 3.500l5 5M15 3.500l-5 5" {...stroke("#1f241a", 1.100)} />
        </svg>
        <svg width="16" height="12" viewBox="0 0 16 12">
          <path d="M6 1.600h7a1 1 0 0 1 1 1v6.800a1 1 0 0 1-1 1H2a1 1 0 0 1-1-1V6M14.800 4.300v3.400" {...stroke("#1f241a", 1.300)} />
          <path d="M2.500 9V6l3-3h2.500v6z" fill="#1f241a" />
          <path d="M3.500-2 0 2.500h2l-1 3.500 4-4.500H3z" fill="#1f241a" />
        </svg>
      </TrayIcons>
      <TrayLines $w={80} $align="flex-end">
        <Label $color="#1b1b1b" $spacing={-0.05}>15:45</Label>
        <Label $color="#1b1b1b">27-03-2025</Label>
      </TrayLines>
    </Tray>
  </Taskbar>
);

export default function App() {
  return (
    <Screen>
      <GlobalStyle />
      <BrowserTabs />
      <BrowserToolbar />
      <MoodPage />
      <DesktopTaskbar />
    </Screen>
  );
}
